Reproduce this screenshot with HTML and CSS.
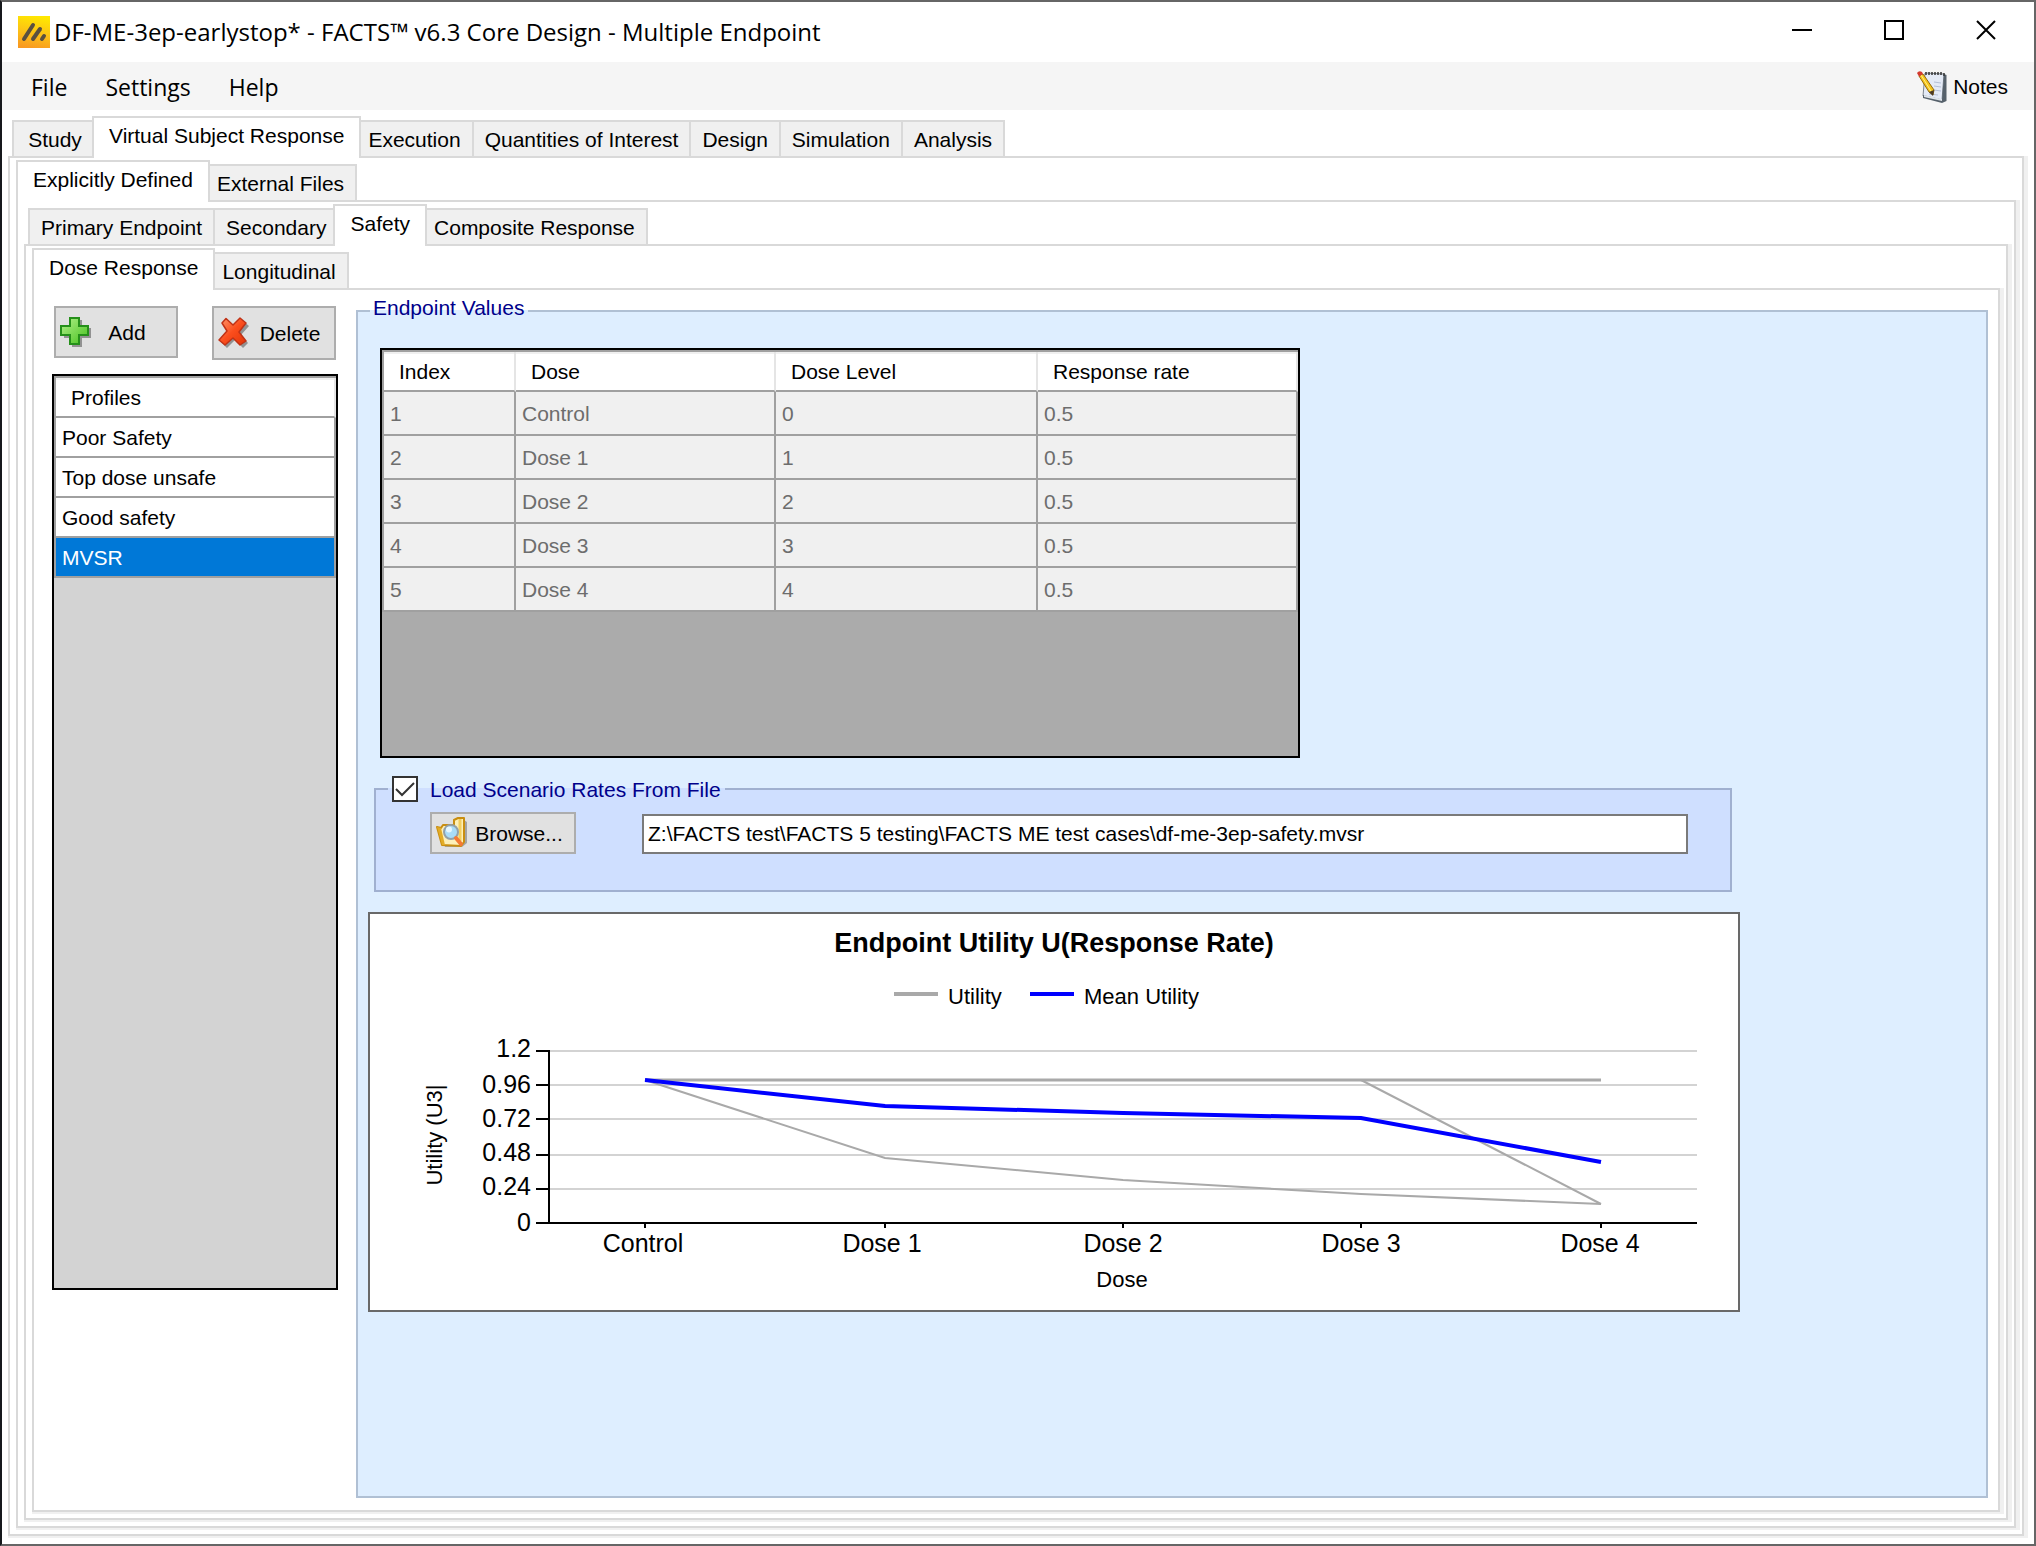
FILE: index.html
```html
<!DOCTYPE html>
<html lang="en">
<head>
<meta charset="utf-8">
<title>DF-ME-3ep-earlystop* - FACTS™ v6.3 Core Design - Multiple Endpoint</title>
<link rel="stylesheet" href="styles.css">
</head>
<body>
<div class="window">
  <header class="titlebar">
    <svg class="app-icon" viewBox="0 0 32 32" aria-hidden="true">
      <defs>
        <linearGradient id="app-bg" x1="0.6" y1="0" x2="0.4" y2="1">
          <stop offset="0" stop-color="#ffe800"/>
          <stop offset="0.55" stop-color="#fcc017"/>
          <stop offset="1" stop-color="#f99a20"/>
        </linearGradient>
      </defs>
      <rect width="32" height="32" fill="url(#app-bg)"/>
      <g stroke="#5a5040" stroke-width="4" stroke-linecap="round">
        <path d="M6 23L15 9"/>
        <path d="M15 23L22 13"/>
        <path d="M24 23L26 20"/>
      </g>
    </svg>
    <h1 class="title">DF-ME-3ep-earlystop* - FACTS™ v6.3 Core Design - Multiple Endpoint</h1>
    <div class="controls">
      <button class="control" type="button" aria-label="Minimize"><svg viewBox="0 0 20 20"><path d="M0 10H20"/></svg></button>
      <button class="control" type="button" aria-label="Maximize"><svg viewBox="0 0 20 20"><path d="M1 1H19V19H1Z"/></svg></button>
      <button class="control" type="button" aria-label="Close"><svg viewBox="0 0 20 20"><path d="M1 1L19 19M19 1L1 19"/></svg></button>
    </div>
  </header>

  <nav class="menubar">
    <button class="menu" type="button">File</button>
    <button class="menu" type="button">Settings</button>
    <button class="menu" type="button">Help</button>
    <button class="notes" type="button">
      <svg class="notes-icon" viewBox="0 0 32 34" aria-hidden="true">
        <path d="M9 3L28 4L26 30L7 26Z" fill="#e4eaf6" stroke="#7d858e" stroke-width="1"/>
        <path d="M28 4L30.500 5V31L26 33L7 28V25L26 29.500Z" fill="#56616b"/>
        <path d="M8 25L26 29L26 31L8 27Z" fill="#dfe4ea"/>
        <path d="M10 2V5M13 2V5M16 2V5M19 2V5M22 2V5M25 2V5M28 3V6" stroke="#333" stroke-width="1.500"/>
        <path d="M18 12L25 13M18 16L25 17M18 20L25 21M13 24L22 25" stroke="#b4bfd6" stroke-width="1"/>
        <path d="M3 6L7 4L18 20L17 25L13 22Z" fill="#f6c51c" stroke="#94690e" stroke-width="1"/>
        <path d="M5 5L15.500 22" stroke="#fff08a" stroke-width="1"/>
        <path d="M13 22L18 20L17 26Z" fill="#4a3a28"/>
        <path d="M1 3Q3 0 6 2L7 4L3 6.500Z" fill="#d43a2e"/>
      </svg>
      Notes
    </button>
  </nav>

  <main class="workspace">
    <div class="tabs tabs-main" role="tablist">
      <button class="tab" type="button" role="tab">Study</button>
      <button class="tab selected" type="button" role="tab" aria-selected="true">Virtual Subject Response</button>
      <button class="tab" type="button" role="tab">Execution</button>
      <button class="tab" type="button" role="tab">Quantities of Interest</button>
      <button class="tab" type="button" role="tab">Design</button>
      <button class="tab" type="button" role="tab">Simulation</button>
      <button class="tab" type="button" role="tab">Analysis</button>
    </div>
    <div class="panel">
      <div class="tabs" role="tablist">
        <button class="tab selected" type="button" role="tab" aria-selected="true">Explicitly Defined</button>
        <button class="tab" type="button" role="tab">External Files</button>
      </div>
      <div class="panel">
        <div class="tabs" role="tablist">
          <button class="tab" type="button" role="tab">Primary Endpoint</button>
          <button class="tab" type="button" role="tab">Secondary</button>
          <button class="tab selected" type="button" role="tab" aria-selected="true">Safety</button>
          <button class="tab" type="button" role="tab">Composite Response</button>
        </div>
        <div class="panel">
          <div class="tabs" role="tablist">
            <button class="tab selected" type="button" role="tab" aria-selected="true">Dose Response</button>
            <button class="tab" type="button" role="tab">Longitudinal</button>
          </div>
          <div class="panel content">
            <section class="profiles">
              <div class="profile-actions">
                <button class="button add" type="button">
                  <svg class="action-icon" viewBox="0 0 32 32" aria-hidden="true">
                    <defs>
                      <linearGradient id="plus-fill" x1="0" y1="0" x2="1" y2="1">
                        <stop offset="0" stop-color="#b4f28c"/>
                        <stop offset="1" stop-color="#45c01d"/>
                      </linearGradient>
                    </defs>
                    <path d="M12 4H22V12H31V22H22V31H12V22H4V12H12Z" fill="#000" opacity="0.35"/>
                    <path d="M10 2H19V10H28V19H19V28H10V19H1V10H10Z" fill="url(#plus-fill)" stroke="#25901a" stroke-width="2"/>
                  </svg>
                  <span>Add</span>
                </button>
                <button class="button delete" type="button">
                  <svg class="action-icon" viewBox="0 0 32 32" aria-hidden="true">
                    <defs>
                      <linearGradient id="cross-fill" x1="0" y1="0" x2="1" y2="1">
                        <stop offset="0" stop-color="#ff9a70"/>
                        <stop offset="0.5" stop-color="#fb4e1d"/>
                        <stop offset="1" stop-color="#e23408"/>
                      </linearGradient>
                    </defs>
                    <path d="M8 4L16 11L24 3L31 9L23 18L30 26L25 31L17 23L9 31L3 25L11 17L6 9Z" fill="#000" opacity="0.35"/>
                    <path d="M8 1.500L15 8L22 1L28 6L21 15L28 24L22 28L15 21L7 28L1 23L9 14L4 6Z" fill="url(#cross-fill)" stroke="#c03216" stroke-width="1.500" stroke-linejoin="round"/>
                  </svg>
                  <span>Delete</span>
                </button>
              </div>
              <div class="grid-box profile-list">
                <table class="data">
                  <thead><tr><th scope="col">Profiles</th></tr></thead>
                  <tbody>
                    <tr><td>Poor Safety</td></tr>
                    <tr><td>Top dose unsafe</td></tr>
                    <tr><td>Good safety</td></tr>
                    <tr class="current"><td>MVSR</td></tr>
                  </tbody>
                </table>
              </div>
            </section>

            <fieldset class="group endpoint">
              <legend>Endpoint Values</legend>
              <div class="endpoint-body">
                <div class="grid-box dose-grid">
                  <table class="data readonly">
                    <colgroup><col class="col-index"><col class="col-dose"><col class="col-level"><col class="col-dose"></colgroup>
                    <thead>
                      <tr><th scope="col">Index</th><th scope="col">Dose</th><th scope="col">Dose Level</th><th scope="col">Response rate</th></tr>
                    </thead>
                    <tbody>
                      <tr><td>1</td><td>Control</td><td>0</td><td>0.5</td></tr>
                      <tr><td>2</td><td>Dose 1</td><td>1</td><td>0.5</td></tr>
                      <tr><td>3</td><td>Dose 2</td><td>2</td><td>0.5</td></tr>
                      <tr><td>4</td><td>Dose 3</td><td>3</td><td>0.5</td></tr>
                      <tr><td>5</td><td>Dose 4</td><td>4</td><td>0.5</td></tr>
                    </tbody>
                  </table>
                </div>

                <fieldset class="group rates">
                  <legend>
                    <input class="check" type="checkbox" id="load-rates" checked>
                    <label for="load-rates">Load Scenario Rates From File</label>
                  </legend>
                  <div class="rates-body">
                    <button class="button browse" type="button">
                      <svg class="browse-icon" viewBox="0 0 32 32" aria-hidden="true">
                        <path d="M5 13L9 30L26 30L31 26V5L28 3" fill="#8a8a8a" opacity="0.7"/>
                        <path d="M1 10L5 11L7 8H18V3L22 1H28V25L25 29L6 28Z" fill="#fdf0b8" stroke="#c98e10" stroke-width="2" stroke-linejoin="round"/>
                        <path d="M1 10L5 11L9 28H6Z" fill="#e3ac25"/>
                        <path d="M24 2V24" stroke="#f3cf60" stroke-width="3"/>
                        <circle cx="15" cy="15" r="7" fill="#a9dcf8" stroke="#93a0a8" stroke-width="2"/>
                        <circle cx="13" cy="12.500" r="3" fill="#e6f7ff"/>
                        <path d="M20 21L25 27" stroke="#f47a35" stroke-width="4" stroke-linecap="round"/>
                      </svg>
                      <span>Browse...</span>
                    </button>
                    <input class="path" type="text" aria-label="Scenario rates file" value="Z:\FACTS test\FACTS 5 testing\FACTS ME test cases\df-me-3ep-safety.mvsr">
                  </div>
                </fieldset>

                <figure class="chart">
                  <svg viewBox="0 0 1368 396" role="img" aria-label="Endpoint Utility U(Response Rate)">
                    <text class="chart-title" x="684" y="38">Endpoint Utility U(Response Rate)</text>

                    <g class="key">
                      <path class="key-utility" d="M524 80H568"/>
                      <text x="578" y="90">Utility</text>
                      <path class="key-mean" d="M660 80H704"/>
                      <text x="714" y="90">Mean Utility</text>
                    </g>

                    <path class="gridlines" d="M179 137H1327M179 171H1327M179 205H1327M179 241H1327M179 275H1327"/>
                    <path class="utility" d="M275 166H1231"/>
                    <path class="utility thin" d="M275 166L515 244L753 266L991 280L1231 290"/>
                    <path class="utility thin" d="M991 166L1231 290"/>
                    <path class="mean" d="M275 166L515 192L753 199L991 204L1231 248"/>
                    <path class="axis" d="M179 136V309H1327M166 137H179M166 171H179M166 205H179M166 241H179M166 275H179M166 309H179M275 309V314M515 309V314M753 309V314M991 309V314M1231 309V314"/>

                    <g class="ticks-y">
                      <text x="161" y="143">1.2</text>
                      <text x="161" y="179">0.96</text>
                      <text x="161" y="213">0.72</text>
                      <text x="161" y="247">0.48</text>
                      <text x="161" y="281">0.24</text>
                      <text x="161" y="317">0</text>
                    </g>
                    <g class="ticks-x">
                      <text x="273" y="338">Control</text>
                      <text x="512" y="338">Dose 1</text>
                      <text x="753" y="338">Dose 2</text>
                      <text x="991" y="338">Dose 3</text>
                      <text x="1230" y="338">Dose 4</text>
                    </g>
                    <text class="axis-title" x="752" y="373">Dose</text>
                    <text class="axis-title" transform="translate(72 221) rotate(-90)">Utility (U3|</text>
                  </svg>
                </figure>
              </div>
            </fieldset>
          </div>
        </div>
      </div>
    </div>
  </main>
</div>
</body>
</html>
```
FILE: styles.css
```css
* {
  box-sizing: border-box;
}

body {
  margin: 0;
  background: #fff;
  color: #000;
  font: 21px/24px "Liberation Sans", Arial, sans-serif;
}

button,
input {
  margin: 0;
  color: inherit;
  font: inherit;
}

button {
  border: 0;
  background: none;
}

.window {
  display: flex;
  flex-direction: column;
  min-height: 100vh;
  border: 2px solid #666;
  border-left-color: #16181c;
}

/* Title bar */

.titlebar {
  display: flex;
  align-items: center;
  height: 60px;
  padding: 0 2px 0 16px;
  background: #fff;
}

.app-icon {
  width: 32px;
  height: 32px;
}

.title {
  flex: 1;
  margin: 0 0 0 4px;
  font: 400 24px/32px "Open Sans", "Noto Sans", sans-serif;
}

.controls {
  display: flex;
  align-self: flex-start;
}

.control {
  width: 92px;
  height: 56px;
  padding: 0;
}

.control svg {
  display: block;
  width: 20px;
  height: 20px;
  margin: 0 auto;
  fill: none;
  stroke: #000;
  stroke-width: 2;
}

/* Menu bar */

.menubar {
  display: flex;
  align-items: center;
  height: 48px;
  padding: 2px 26px 0 10px;
  background: #f5f5f5;
}

.menu {
  padding: 0 19px;
  font: 23px/32px "Open Sans", "Noto Sans", sans-serif;
}

.notes {
  display: flex;
  align-items: center;
  gap: 5px;
  margin-left: auto;
  padding: 0;
}

.notes-icon {
  width: 32px;
  height: 34px;
}

/* Nested tab pages */

.workspace {
  display: flex;
  flex: 1;
  flex-direction: column;
  padding: 0 10px 8px 6px;
}

.tabs {
  display: flex;
  align-items: flex-end;
  height: 42px;
  padding-left: 4px;
}

.tabs-main {
  height: 46px;
}

.tab {
  min-width: 86px;
  height: 36px;
  margin-right: -2px;
  padding: 2px 11px 0;
  border: 2px solid #d9d9d9;
  border-bottom: 0;
  background: #f0f0f0;
  white-space: nowrap;
}

.tab.selected {
  z-index: 1;
  height: 42px;
  margin: 0 -6px -2px -4px;
  padding: 0 15px 4px;
  background: #fff;
}

.panel {
  display: flex;
  flex: 1;
  flex-direction: column;
  padding: 0 6px 6px;
  border: 2px solid #d9d9d9;
  background: #fff;
  box-shadow: 4px 0 #f0f0f0, 4px 2px #f0f0f0, 0 2px #f0f0f0;
}

.content {
  display: grid;
  grid-template-columns: 286px minmax(0, 1fr);
  gap: 18px;
  padding: 6px 10px 12px 18px;
}

/* Push buttons */

.button {
  display: flex;
  align-items: center;
  padding: 0 4px;
  border: 2px solid #adadad;
  background: #e1e1e1;
}

.profiles {
  padding-top: 10px;
}

.profile-actions {
  display: flex;
  justify-content: space-between;
  height: 68px;
  padding: 0 2px;
}

.profile-actions .button {
  width: 124px;
  height: 54px;
}

.profile-actions .add {
  height: 52px;
  padding-right: 14px;
}

.action-icon {
  width: 32px;
  height: 32px;
}

.button span {
  flex: 1;
  padding-top: 2px;
  text-align: center;
}

/* Data grids */

.grid-box {
  border: 2px solid #000;
}

.profile-list {
  min-height: 916px;
  background: #d3d3d3;
}

.dose-grid {
  max-width: 920px;
  min-height: 410px;
  margin-left: 12px;
  background: #ababab;
}

.data {
  width: 100%;
  border: 2px solid #a0a0a0;
  border-width: 2px 0 0 2px;
  border-spacing: 0;
  table-layout: fixed;
}

.data th,
.data td {
  height: 40px;
  padding: 2px 6px 0;
  border: 2px solid #a0a0a0;
  border-width: 0 2px 2px 0;
  background: #fff;
  font-weight: 400;
  text-align: left;
}

.data th {
  padding: 2px 15px 0;
  border-right-color: #e5e5e5;
  box-shadow: inset 0 2px #f0f0f0;
}

.data.readonly td {
  height: 44px;
  background: #f0f0f0;
  color: #6d6d6d;
}

.data .current td {
  background: #0078d7;
  color: #fff;
}

.col-index {
  width: 132px;
}

.col-dose {
  width: 260px;
}

.col-level {
  width: 262px;
}

/* Group boxes */

.group {
  min-width: 0;
  margin: 0;
  padding: 0;
}

.group legend {
  color: #00008b;
}

.endpoint {
  border: 2px solid #b0c0d4;
  background: #deeeff;
}

.endpoint > legend {
  margin-left: 12px;
  padding: 0 4px 6px 3px;
}

.endpoint-body {
  padding: 22px 10px 0;
}

.rates {
  max-width: 1358px;
  margin: 18px 0 20px 6px;
  border: 2px solid #a0b0d0;
  background: #cfdfff;
}

.rates > legend {
  display: flex;
  align-items: center;
  gap: 12px;
  height: 26px;
  margin-left: 12px;
  padding: 0 4px;
}

.rates label {
  padding-top: 2px;
}

.check {
  width: 26px;
  height: 26px;
  border: 2px solid #333;
  appearance: none;
  background: #fff;
}

.check:checked {
  background: #fff url("data:image/svg+xml,%3Csvg xmlns='http://www.w3.org/2000/svg' viewBox='0 0 22 22'%3E%3Cpath d='M2 11L8 17L20 5' fill='none' stroke='%23333' stroke-width='2'/%3E%3C/svg%3E") center / 22px 22px no-repeat;
}

.rates-body {
  display: flex;
  align-items: flex-end;
  gap: 66px;
  padding: 10px 42px 36px 54px;
}

.browse {
  width: 146px;
  height: 42px;
}

.browse-icon {
  width: 32px;
  height: 32px;
}

.path {
  flex: 1;
  min-width: 0;
  height: 40px;
  padding: 0 4px;
  border: 2px solid #7a7a7a;
  background: #fff;
}

/* Utility chart */

.chart {
  max-width: 1372px;
  margin: 0;
  border: 2px solid #696969;
  background: #fff;
}

.chart svg {
  display: block;
  width: 100%;
  font-size: 22px;
}

.chart path {
  fill: none;
}

.chart-title {
  font-size: 27px;
  font-weight: 700;
  text-anchor: middle;
}

.key-utility {
  stroke: #a9a9a9;
  stroke-width: 4;
}

.key-mean,
.mean {
  stroke: #00f;
  stroke-width: 4;
}

.gridlines {
  stroke: #d3d3d3;
  stroke-width: 2;
}

.utility {
  stroke: #a9a9a9;
  stroke-width: 3;
}

.utility.thin {
  stroke-width: 2;
}

.axis {
  stroke: #000;
  stroke-width: 2;
}

.ticks-y {
  font-size: 25px;
  text-anchor: end;
}

.ticks-x {
  font-size: 25px;
  text-anchor: middle;
}

.axis-title {
  text-anchor: middle;
}
```
